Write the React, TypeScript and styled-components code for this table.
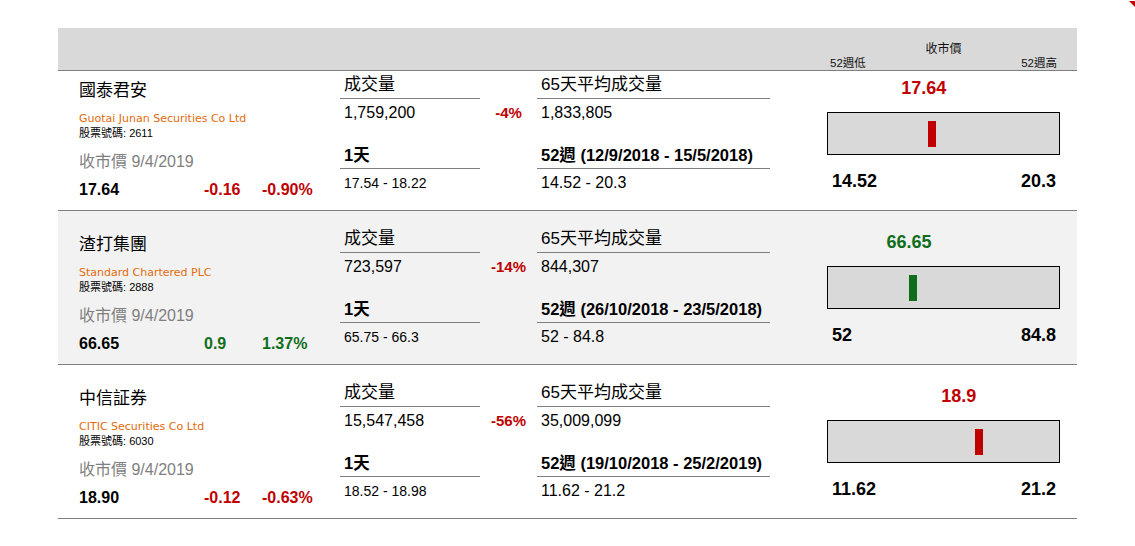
import styled, { createGlobalStyle } from "styled-components";

const RED = "#c00000";
const GREEN = "#0f6e1a";
const RULE = "#7f7f7f";

const GlobalStyle = createGlobalStyle`
    body {
        margin: 0;
        background: #fff;
        color: #000;
        font-family: "Liberation Sans", Arial, "Noto Sans CJK TC", sans-serif;
    }
`;

type Stock = {
    name: string;
    english: string;
    code: string;
    date: string;
    close: number;
    closeText: string;
    change: string;
    percent: string;
    up: boolean;
    volume: string;
    volumeChange: string;
    average: string;
    dayRange: string;
    weekLabel: string;
    weekRange: string;
    low: number;
    high: number;
};

const stocks: Stock[] = [
    {
        name: "國泰君安",
        english: "Guotai Junan Securities Co Ltd",
        code: "2611",
        date: "9/4/2019",
        close: 17.64,
        closeText: "17.64",
        change: "-0.16",
        percent: "-0.90%",
        up: false,
        volume: "1,759,200",
        volumeChange: "-4%",
        average: "1,833,805",
        dayRange: "17.54 - 18.22",
        weekLabel: "52週 (12/9/2018 - 15/5/2018)",
        weekRange: "14.52 - 20.3",
        low: 14.52,
        high: 20.3,
    },
    {
        name: "渣打集團",
        english: "Standard Chartered PLC",
        code: "2888",
        date: "9/4/2019",
        close: 66.65,
        closeText: "66.65",
        change: "0.9",
        percent: "1.37%",
        up: true,
        volume: "723,597",
        volumeChange: "-14%",
        average: "844,307",
        dayRange: "65.75 - 66.3",
        weekLabel: "52週 (26/10/2018 - 23/5/2018)",
        weekRange: "52 - 84.8",
        low: 52,
        high: 84.8,
    },
    {
        name: "中信証券",
        english: "CITIC Securities Co Ltd",
        code: "6030",
        date: "9/4/2019",
        close: 18.9,
        closeText: "18.90",
        change: "-0.12",
        percent: "-0.63%",
        up: false,
        volume: "15,547,458",
        volumeChange: "-56%",
        average: "35,009,099",
        dayRange: "18.52 - 18.98",
        weekLabel: "52週 (19/10/2018 - 25/2/2019)",
        weekRange: "11.62 - 21.2",
        low: 11.62,
        high: 21.2,
    },
];

const Frame = styled.div`
    position: relative;
    min-height: 546px;
    padding: 28px 0 0 58px;
    box-sizing: border-box;
`;

const CornerMark = styled.svg`
    position: absolute;
    top: 1px;
    right: 0;
    width: 6px;
    height: 6px;
`;

const Table = styled.div`
    width: 1019px;
`;

const columns = "282px 140px 57px 233px 307px";

const HeaderRow = styled.div`
    display: grid;
    grid-template-columns: ${columns};
    height: 42px;
    background: #d9d9d9;
    border-bottom: 1px solid ${RULE};
`;

const RangeHead = styled.div`
    grid-column: 5;
    width: 233px;
    margin-left: 57px;
    padding-top: 14px;
    color: #111;
`;

const HeadTitle = styled.div`
    font-size: 12px;
    line-height: 14px;
    text-align: center;
`;

const HeadEnds = styled.div`
    display: flex;
    justify-content: space-between;
    padding: 0 3px;
    font-size: 11.5px;
    line-height: 14px;
`;

const Row = styled.div<{ $first: boolean; $shaded: boolean }>`
    display: grid;
    grid-template-columns: ${columns};
    height: 139px;
    padding-top: ${(p) => (p.$first ? 0 : 14)}px;
    background: ${(p) => (p.$shaded ? "#f2f2f2" : "transparent")};
    border-bottom: 1px solid ${RULE};
`;

const NameCell = styled.div`
    padding: 10px 0 0 21px;
`;

const StockName = styled.div`
    font-size: 17px;
    line-height: 20px;
`;

const EnglishName = styled.div`
    margin-top: 11px;
    font-family: "DejaVu Sans", Verdana, sans-serif;
    font-size: 11px;
    line-height: 14px;
    color: #e26b0a;
`;

const StockCode = styled.div`
    font-size: 11px;
    line-height: 15px;
`;

const CloseDate = styled.div`
    margin-top: 11px;
    font-size: 16px;
    line-height: 20px;
    color: #7f7f7f;
`;

const PriceLine = styled.div`
    display: grid;
    grid-template-columns: 125px 58px auto;
    margin-top: 8px;
    font-size: 16px;
    font-weight: bold;
    line-height: 20px;
`;

const Figure = styled.span<{ $tone?: string }>`
    color: ${(p) => p.$tone ?? "#000"};
`;

const StatCell = styled.div`
    display: flex;
    flex-direction: column;
    gap: 22px;
    padding-top: 4px;
`;

const StatLabel = styled.div<{ $bold?: boolean }>`
    padding: 0 0 3px 4px;
    border-bottom: 1px solid ${RULE};
    font-size: ${(p) => (p.$bold ? "16.5px" : "17px")};
    font-weight: ${(p) => (p.$bold ? "bold" : "normal")};
    line-height: 20px;
    white-space: nowrap;
`;

const StatValue = styled.div<{ $size: number }>`
    margin-top: 4px;
    padding-left: 4px;
    font-size: ${(p) => p.$size}px;
    line-height: 20px;
`;

const ChangeCell = styled.div`
    padding-top: 32px;
    text-align: center;
    font-size: 15px;
    font-weight: bold;
    line-height: 20px;
    color: ${RED};
`;

const RangeCell = styled.div`
    padding: 7px 0 0 57px;
`;

const TagLine = styled.div`
    width: 233px;
    height: 20px;
    box-sizing: border-box;
`;

const PriceTag = styled.span<{ $tone: string }>`
    display: inline-block;
    transform: translateX(-50%);
    font-size: 18px;
    font-weight: bold;
    line-height: 20px;
    color: ${(p) => p.$tone};
`;

const Track = styled.div`
    position: relative;
    width: 233px;
    height: 43px;
    margin-top: 14px;
    box-sizing: border-box;
    border: 1px solid #000;
    background: #d9d9d9;
`;

const Marker = styled.div<{ $tone: string }>`
    position: absolute;
    top: 8px;
    width: 8px;
    height: 26px;
    background: ${(p) => p.$tone};
`;

const EndValues = styled.div`
    display: flex;
    justify-content: space-between;
    width: 233px;
    margin-top: 16px;
    padding: 0 4px 0 5px;
    box-sizing: border-box;
    font-size: 18px;
    font-weight: bold;
    line-height: 20px;
`;

function StockRow({ stock, index }: { stock: Stock; index: number }) {
    const tone = stock.up ? GREEN : RED;
    const share = (stock.close - stock.low) / (stock.high - stock.low);

    return (
        <Row $first={index === 0} $shaded={index === 1}>
            <NameCell>
                <StockName>{stock.name}</StockName>
                <EnglishName>{stock.english}</EnglishName>
                <StockCode>股票號碼: {stock.code}</StockCode>
                <CloseDate>收市價 {stock.date}</CloseDate>
                <PriceLine>
                    <Figure>{stock.closeText}</Figure>
                    <Figure $tone={tone}>{stock.change}</Figure>
                    <Figure $tone={tone}>{stock.percent}</Figure>
                </PriceLine>
            </NameCell>

            <StatCell>
                <div>
                    <StatLabel>成交量</StatLabel>
                    <StatValue $size={16}>{stock.volume}</StatValue>
                </div>
                <div>
                    <StatLabel $bold>1天</StatLabel>
                    <StatValue $size={14}>{stock.dayRange}</StatValue>
                </div>
            </StatCell>

            <ChangeCell>{stock.volumeChange}</ChangeCell>

            <StatCell>
                <div>
                    <StatLabel>65天平均成交量</StatLabel>
                    <StatValue $size={16}>{stock.average}</StatValue>
                </div>
                <div>
                    <StatLabel $bold>{stock.weekLabel}</StatLabel>
                    <StatValue $size={16}>{stock.weekRange}</StatValue>
                </div>
            </StatCell>

            <RangeCell>
                <TagLine style={{ paddingLeft: 11 + share * 159 }}>
                    <PriceTag $tone={tone}>{String(stock.close)}</PriceTag>
                </TagLine>
                <Track>
                    <Marker $tone={tone} style={{ left: share * 212 - 14 }} />
                </Track>
                <EndValues>
                    <span>{String(stock.low)}</span>
                    <span>{String(stock.high)}</span>
                </EndValues>
            </RangeCell>
        </Row>
    );
}

export default function App() {
    return (
        <Frame>
            <GlobalStyle />
            <CornerMark viewBox="0 0 6 6">
                <polygon points="0,0 6,0 6,6" fill={RED} />
            </CornerMark>
            <Table>
                <HeaderRow>
                    <RangeHead>
                        <HeadTitle>收市價</HeadTitle>
                        <HeadEnds>
                            <span>52週低</span>
                            <span>52週高</span>
                        </HeadEnds>
                    </RangeHead>
                </HeaderRow>
                {stocks.map((stock, index) => (
                    <StockRow key={stock.code} stock={stock} index={index} />
                ))}
            </Table>
        </Frame>
    );
}
